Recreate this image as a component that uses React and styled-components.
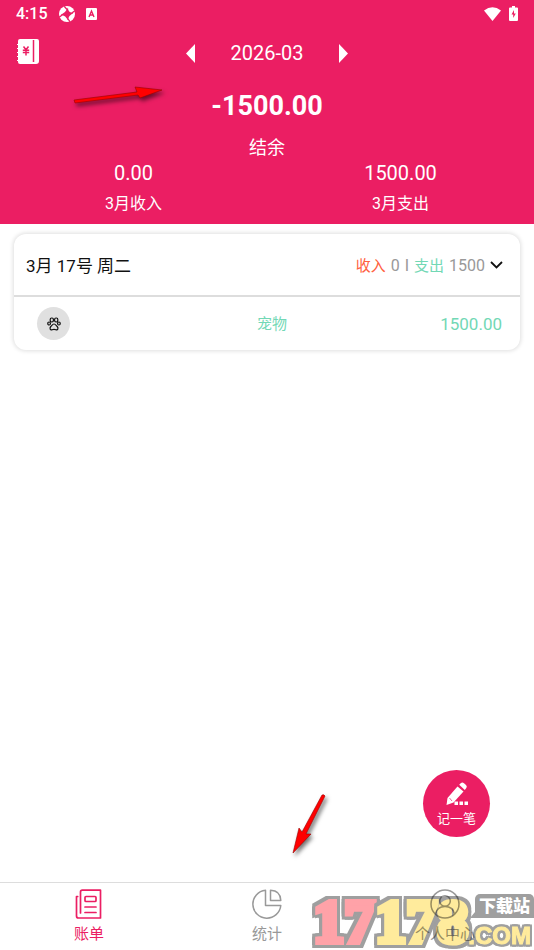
import React from 'react'
import styled, { createGlobalStyle } from 'styled-components'

const PINK = '#eb1e63'
const GREEN = '#72d8b5'
const ORANGE = '#ff6040'
const GRAY = '#999'

const GlobalStyle = createGlobalStyle`
	* {
		box-sizing: border-box;
	}
	body {
		margin: 0;
		background: #fff;
		font-family: Roboto, "Noto Sans CJK SC", sans-serif;
		color: #111;
	}
	button {
		border: 0;
		padding: 0;
		background: none;
		color: inherit;
		font: inherit;
		cursor: pointer;
	}
	svg {
		display: block;
		flex: none;
	}
`

const Page = styled.div`
	position: relative;
	display: flex;
	flex-direction: column;
	min-height: 100vh;
	overflow: hidden;
`

const Header = styled.header`
	background: ${PINK};
	color: #fff;
	padding-bottom: 8px;
`

const StatusBar = styled.div`
	display: flex;
	align-items: center;
	gap: 11px;
	height: 27px;
	padding: 0 16px;
	font-size: 16px;
	font-weight: 500;
`

const StatusRight = styled.div`
	display: flex;
	align-items: center;
	gap: 8px;
	margin-left: auto;
`

const Toolbar = styled.div`
	display: grid;
	grid-template-columns: 1fr auto 1fr;
	align-items: center;
	height: 52px;
	padding: 0 17px;
`

const MonthPicker = styled.div`
	display: flex;
	align-items: center;
	justify-content: space-between;
	width: 162px;
	font-size: 20px;
`

const Balance = styled.div`
	display: flex;
	flex-direction: column;
	align-items: center;
`

const BalanceValue = styled.strong`
	font-size: 27px;
	font-weight: 700;
	line-height: 54px;
`

const BalanceLabel = styled.span`
	padding-top: 3px;
	font-size: 18px;
	line-height: 24px;
`

const Totals = styled.div`
	display: grid;
	grid-template-columns: 1fr 1fr;
	text-align: center;
`

const TotalValue = styled.div`
	font-size: 20px;
	line-height: 26px;
`

const TotalLabel = styled.div`
	padding-top: 6px;
	font-size: 16px;
	line-height: 24px;
`

const Main = styled.main`
	flex: 1;
	padding: 10px 14px;
`

const Card = styled.section`
	border-radius: 12px;
	background: #fff;
	box-shadow: 0 0 4px 1px rgba(0, 0, 0, 0.13);
`

const DayRow = styled.button`
	display: flex;
	align-items: center;
	justify-content: space-between;
	width: 100%;
	height: 63px;
	&& {
		padding: 0 17px 0 12px;
		border-bottom: 2px solid #ddd;
		font-size: 17px;
	}
`

const DaySummary = styled.span`
	display: flex;
	align-items: baseline;
	gap: 5px;
	font-size: 16px;
	color: ${GRAY};
	svg {
		align-self: center;
	}
`

const Tag = styled.span`
	font-size: 15px;
	color: ${props => props.$color};
`

const BillRow = styled.div`
	display: grid;
	grid-template-columns: 1fr auto 1fr;
	align-items: center;
	height: 53px;
	padding: 0 18px 0 23px;
	color: ${GREEN};
`

const CategoryIcon = styled.span`
	display: flex;
	align-items: center;
	justify-content: center;
	width: 33px;
	height: 33px;
	border-radius: 50%;
	background: #e0e0e0;
`

const CategoryName = styled.span`
	padding-left: 5px;
	font-size: 15px;
	line-height: 24px;
`

const BillAmount = styled.span`
	font-size: 17px;
	line-height: 24px;
	text-align: right;
`

const AddButton = styled.button`
	position: absolute;
	right: 44px;
	bottom: 113px;
	display: flex;
	flex-direction: column;
	align-items: center;
	justify-content: center;
	gap: 4px;
	width: 67px;
	height: 67px;
	border-radius: 50%;
	&& {
		padding-top: 2px;
		background: ${PINK};
		color: #fff;
		font-size: 13px;
		line-height: 18px;
	}
`

const TabBar = styled.nav`
	display: grid;
	grid-template-columns: repeat(3, 1fr);
	height: 68px;
	border-top: 1px solid #ddd;
`

const Tab = styled.a`
	display: flex;
	flex-direction: column;
	align-items: center;
	gap: 3px;
	padding-top: 6px;
	font-size: 15px;
	line-height: 24px;
	text-decoration: none;
	color: ${props => (props.$active ? PINK : GRAY)};
`

const Arrow = styled.svg`
	position: absolute;
	left: ${props => props.$left}px;
	${props => props.$top && `top: ${props.$top}px;`}
	${props => props.$bottom && `bottom: ${props.$bottom}px;`}
	filter: drop-shadow(2px 3px 2px rgba(0, 0, 0, 0.55));
	pointer-events: none;
`

const Watermark = styled.div`
	position: absolute;
	right: 0;
	bottom: 0;
	display: flex;
	align-items: flex-end;
	height: 60px;
	mix-blend-mode: multiply;
	pointer-events: none;
`

// thick slab digits with a hard square outline
const Digits = styled.span`
	font-family: "Liberation Serif", serif;
	font-size: 62px;
	font-weight: 700;
	line-height: 58px;
	color: ${props => props.$color};
	-webkit-text-stroke: 6px ${props => props.$color};
	filter:
		drop-shadow(3px 0 0 #9f9f9f)
		drop-shadow(-3px 0 0 #9f9f9f)
		drop-shadow(0 3px 0 #9f9f9f)
		drop-shadow(0 -3px 0 #9f9f9f);
`

const SiteName = styled.div`
	position: relative;
	display: flex;
	flex-direction: column;
	align-items: flex-end;
	gap: 4px;
`

const Bubble = styled.span`
	position: relative;
	padding: 0 4px;
	border-radius: 5px 5px 0 0;
	background: #9f9f9f;
	color: #fff;
	font-size: 17px;
	font-weight: 900;
	line-height: 24px;
	&::before {
		content: "";
		position: absolute;
		right: 100%;
		bottom: 0;
		border-left: 5px solid transparent;
		border-bottom: 6px solid #9f9f9f;
	}
`

const Domain = styled.span`
	padding-right: 3px;
	font-family: "Liberation Sans", sans-serif;
	font-size: 24px;
	font-weight: 700;
	line-height: 28px;
	color: #ffeb9c;
	-webkit-text-stroke: 1px #ffeb9c;
	filter:
		drop-shadow(2px 0 0 #9f9f9f)
		drop-shadow(-2px 0 0 #9f9f9f)
		drop-shadow(0 2px 0 #9f9f9f)
		drop-shadow(0 -2px 0 #9f9f9f);
`

function BrowserIcon() {
	return (
		<svg width="16" height="16" viewBox="0 0 16 16">
			<circle cx="8" cy="8" r="8" fill="#fff" />
			<path d="M8.500 3.800Q8.800 6.500 12.200 7.500 9.500 8.800 8.500 12.200 7.200 9.500 3.800 8.500 6.500 7.200 8.500 3.800z" fill={PINK} stroke={PINK} strokeWidth="1.500" />
			<path d="M8.500 4 5.200.3M12.200 7.500 15.800 4.800M8.500 12 11 15.800M3.800 8.500.2 11.200" stroke={PINK} strokeWidth="1.300" />
		</svg>
	)
}

function KeyboardIcon() {
	return (
		<svg width="11" height="12" viewBox="0 0 11 12">
			<rect width="11" height="12" rx="1" fill="#fff" />
			<path d="M3 9 5.500 3 8 9M4 7h3" fill="none" stroke={PINK} strokeWidth="1.400" />
		</svg>
	)
}

function WifiIcon() {
	return (
		<svg width="17" height="14" viewBox="0 0 17 14">
			<path d="M0 3.500Q8.500-3 17 3.500L8.500 14z" fill="#fff" />
		</svg>
	)
}

function BatteryIcon() {
	return (
		<svg width="9" height="15" viewBox="0 0 9 15">
			<path d="M3 0h3v1.500h2q1 0 1 1V14q0 1-1 1H1q-1 0-1-1V2.500q0-1 1-1h2z" fill="#fff" />
			<path d="M5 4 2.500 8.500H4.200V12L6.800 7.500H5z" fill={PINK} />
		</svg>
	)
}

function LedgerIcon() {
	return (
		<svg width="22" height="25" viewBox="0 0 22 25">
			<path d="M3 0h17q2 0 2 2v20q0 3-3 3H3q-2 0-2-2v-1H0v-1h1v-3H0v-1h1v-3H0v-1h1v-3H0V9h1V6H0V5h1V2q0-2 2-2z" fill="#fff" />
			<path d="M16.500 1v22" stroke={PINK} strokeWidth="1.500" />
			<path d="M6.500 7.500 9 10.800l2.500-3.300M5.800 11.300h6.400M5.800 13.600h6.400M9 11v5.500" fill="none" stroke={PINK} strokeWidth="1.500" />
		</svg>
	)
}

function Triangle({ right }) {
	return (
		<svg width="9" height="19" viewBox="0 0 9 19">
			<path d={right ? 'M0 0 9 9.500 0 19z' : 'M9 0 0 9.500 9 19z'} fill="#fff" />
		</svg>
	)
}

function ChevronIcon() {
	return (
		<svg width="13" height="8" viewBox="0 0 13 8">
			<path d="M1 1 6.500 6.500 12 1" fill="none" stroke="#111" strokeWidth="1.800" />
		</svg>
	)
}

function PawIcon() {
	return (
		<svg width="14" height="14" viewBox="0 0 14 14" fill="none" stroke="#111" strokeWidth="1.200">
			<rect x="3.200" y="1" width="3.200" height="4" rx="1.400" />
			<rect x="7.600" y="1" width="3.200" height="4" rx="1.400" />
			<rect x=".8" y="5" width="2.600" height="3" rx="1.200" />
			<rect x="10.600" y="5" width="2.600" height="3" rx="1.200" />
			<path d="M7 7C5.500 7 5 8.300 3.800 9.500 2.300 11.300 3.200 13.300 5 12.800 6.500 12.300 7.500 12.300 9 12.800 10.800 13.300 11.700 11.300 10.200 9.500 9 8.300 8.500 7 7 7z" />
		</svg>
	)
}

function PencilIcon() {
	return (
		<svg width="22" height="24" viewBox="0 0 22 24" fill="#fff">
			<path d="M11.500 4.500 17.500 9.500 7.500 20.500.5 23 1.500 16z" />
			<path d="M13.200 2.800 15 1q1.500-1 3 .3l2 1.700q1.500 1.500.3 3L18.800 8z" />
			<path d="M8.500 19.500h3.500v3.500H8.500zM13.500 19.500h3.500v3.500h-3.500zM18.500 19.500h3.500v3.500h-3.500z" />
			<path d="M3.500 16 6 19" stroke={PINK} strokeWidth=".7" />
		</svg>
	)
}

function BillIcon() {
	return (
		<svg width="30" height="30" viewBox="0 0 30 30" fill="none" stroke="currentColor" strokeWidth="1.700" strokeLinecap="round" strokeLinejoin="round">
			<path d="M6.500 24V3q0-1.800 1.800-1.800H26.500V29H4.500Q2.500 29 2.500 27V7.500h1.200" />
			<rect x="11" y="7.500" width="11" height="5" rx="1" />
			<path d="M11 18h11M11 23.500h11" />
		</svg>
	)
}

function ChartIcon() {
	return (
		<svg width="30" height="30" viewBox="0 0 30 30" fill="none" stroke="currentColor" strokeWidth="1.500" strokeLinejoin="round">
			<path d="M13.500 1.200A14 14 0 1 0 28.800 16.500H13.500z" />
			<path d="M18.500 1.200V11.500H28.800Q28.500 1.500 18.500 1.200z" />
		</svg>
	)
}

function UserIcon() {
	return (
		<svg width="30" height="30" viewBox="0 0 30 30" fill="none" stroke="currentColor" strokeWidth="1.500">
			<circle cx="15" cy="15" r="14" />
			<circle cx="15" cy="12" r="5.300" />
			<path d="M5.500 25Q7 17.500 15 17.500T24.500 25" />
		</svg>
	)
}

const tabs = [
	{ id: 'bills', label: '账单', icon: <BillIcon />, active: true },
	{ id: 'stats', label: '统计', icon: <ChartIcon /> },
	{ id: 'profile', label: '个人中心', icon: <UserIcon /> },
]

const totals = [
	{ label: '3月收入', value: '0.00' },
	{ label: '3月支出', value: '1500.00' },
]

export default function App() {
	return (
		<Page>
			<GlobalStyle />
			<Header>
				<StatusBar>
					<span>4:15</span>
					<BrowserIcon />
					<KeyboardIcon />
					<StatusRight>
						<WifiIcon />
						<BatteryIcon />
					</StatusRight>
				</StatusBar>
				<Toolbar>
					<div>
						<button aria-label="账本"><LedgerIcon /></button>
					</div>
					<MonthPicker>
						<button aria-label="上个月"><Triangle /></button>
						<span>2026-03</span>
						<button aria-label="下个月"><Triangle right /></button>
					</MonthPicker>
				</Toolbar>
				<Balance>
					<BalanceValue>-1500.00</BalanceValue>
					<BalanceLabel>结余</BalanceLabel>
				</Balance>
				<Totals>
					{totals.map(({ label, value }) => (
						<div key={label}>
							<TotalValue>{value}</TotalValue>
							<TotalLabel>{label}</TotalLabel>
						</div>
					))}
				</Totals>
			</Header>

			<Main>
				<Card>
					<DayRow>
						<span>3月 17号 周二</span>
						<DaySummary>
							<Tag $color={ORANGE}>收入</Tag>
							<span>0</span>
							<span>I</span>
							<Tag $color={GREEN}>支出</Tag>
							<span>1500</span>
							<ChevronIcon />
						</DaySummary>
					</DayRow>
					<BillRow>
						<CategoryIcon><PawIcon /></CategoryIcon>
						<CategoryName>宠物</CategoryName>
						<BillAmount>1500.00</BillAmount>
					</BillRow>
				</Card>
			</Main>

			<AddButton>
				<PencilIcon />
				记一笔
			</AddButton>

			<TabBar>
				{tabs.map(({ id, label, icon, active }) => (
					<Tab key={id} href={`#${id}`} $active={active}>
						{icon}
						{label}
					</Tab>
				))}
			</TabBar>

			<Watermark>
				<Digits $color="#ffa2a8">17</Digits>
				<Digits $color="#ffeb9c">178</Digits>
				<SiteName>
					<Bubble>下载站</Bubble>
					<Domain>.COM</Domain>
				</SiteName>
			</Watermark>

			<Arrow $left={73} $top={84} width="90" height="22" viewBox="0 0 90 22">
				<path d="M1 16 64 8 62 3 89 6 67 14 65 11 2 19z" fill="#f00" stroke="#900" strokeWidth=".6" />
			</Arrow>
			<Arrow $left={291} $bottom={95} width="36" height="62" viewBox="0 0 36 62">
				<path d="M31 2q2-1 3 1L15 41l5 0L2 60 8 35l3 4z" fill="#f00" stroke="#900" strokeWidth=".6" />
			</Arrow>
		</Page>
	)
}
